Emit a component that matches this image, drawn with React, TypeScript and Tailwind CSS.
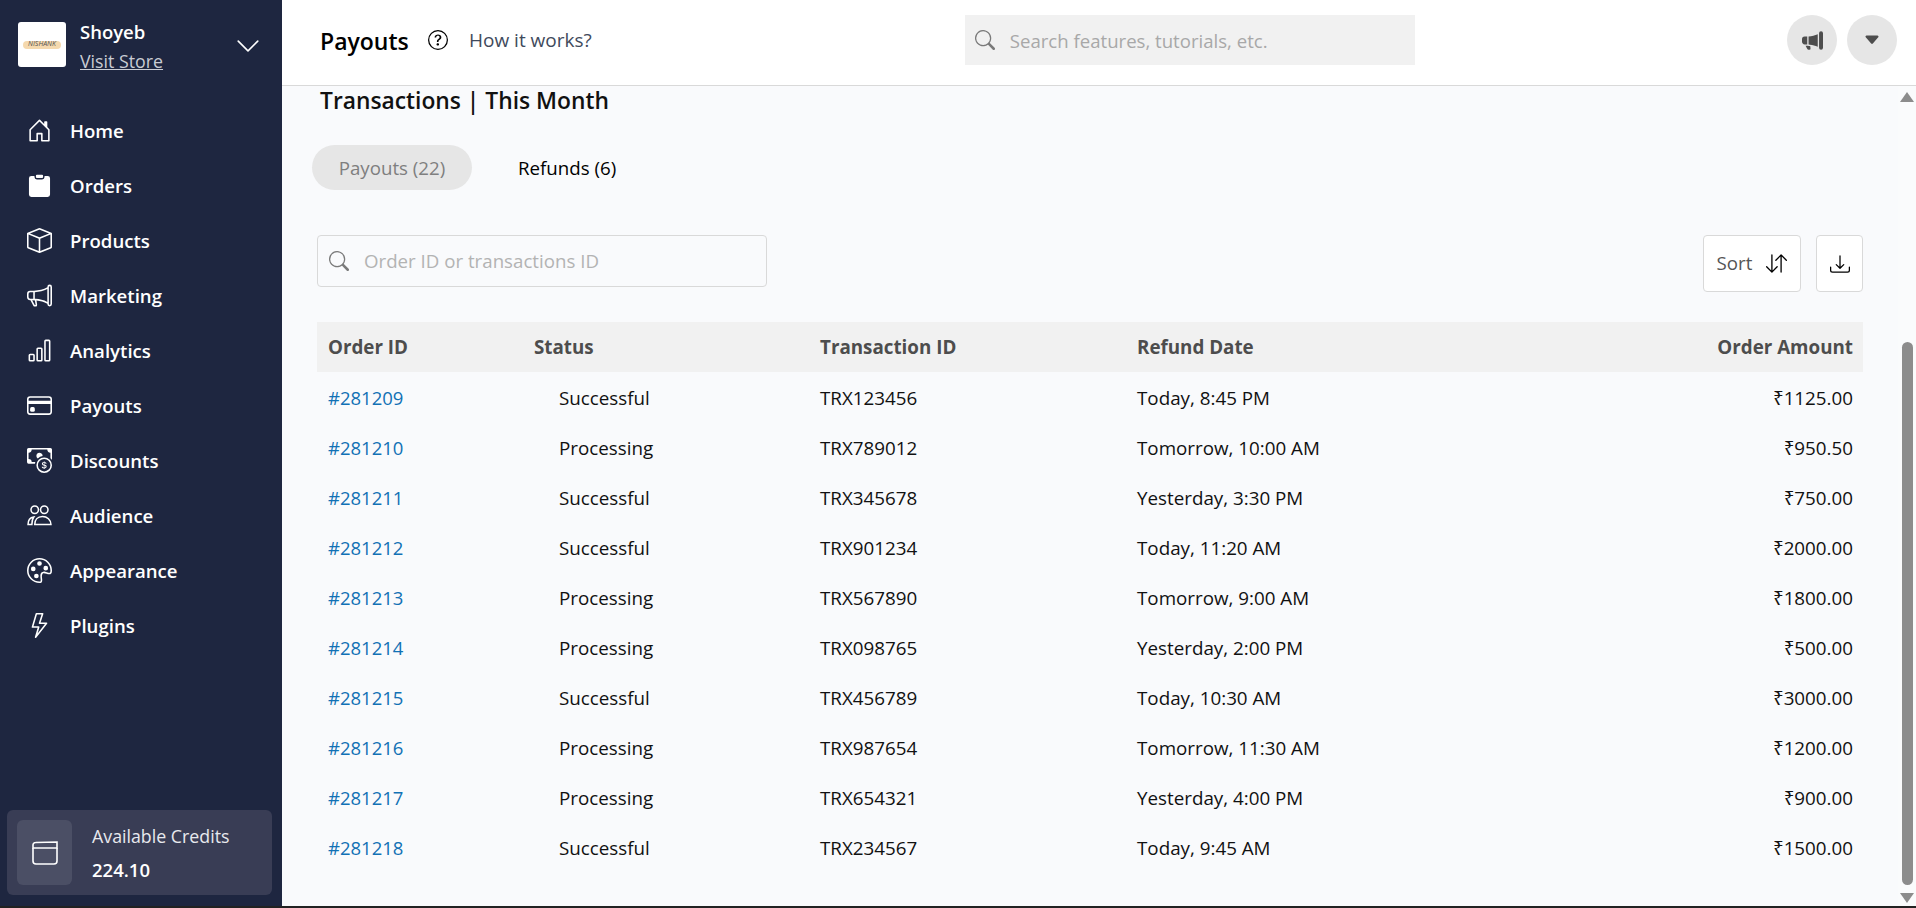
import {
  BsArrowDownUp,
  BsBarChart,
  BsBox,
  BsCaretDownFill,
  BsCashCoin,
  BsChevronDown,
  BsCreditCard,
  BsDownload,
  BsHouseDoor,
  BsLightning,
  BsMegaphone,
  BsMegaphoneFill,
  BsPalette,
  BsQuestionCircle,
  BsSearch,
} from "react-icons/bs";

function OrdersIcon({ className }: { className?: string }) {
  return (
    <svg viewBox="0 0 24 26" className={className} fill="none">
      <path d="M3.5 3H20.5A2.5 2.5 0 0 1 23 5.5V22.5A2.5 2.5 0 0 1 20.5 25H3.500A2.500 2.500 0 0 1 1 22.5V5.500A2.500 2.500 0 0 1 3.500 3Z" fill="#fff" />
      <rect x="7.500" y="1" width="9" height="5" rx="1.800" fill="#fff" stroke="#1e2640" strokeWidth="1.500" />
    </svg>
  );
}

function AudienceIcon({ className }: { className?: string }) {
  return (
    <svg viewBox="0 0 26 22" className={className} fill="none" stroke="#fff" strokeWidth="1.600">
      <circle cx="8" cy="5" r="3.900" />
      <circle cx="18" cy="5" r="3.900" />
      <path d="M1 20.500C1 16 3 13 7 12.500C5.500 14.500 5 17 5 20.500Z" />
      <path d="M8 20.500C8 15.500 11 12 16 12C21 12 25 15.500 25 20.500Z" />
    </svg>
  );
}

function CreditsIcon({ className }: { className?: string }) {
  return (
    <svg viewBox="0 0 26 24" className={className} fill="none" stroke="#fff" strokeWidth="1.600">
      <path d="M1 7V20A3 3 0 0 0 4 23H22A3 3 0 0 0 25 20V7" />
      <path d="M1 7V4A2.500 2.500 0 0 1 3.500 1.500L25 1V7H1Z" />
    </svg>
  );
}

const navItems = [
  { label: "Home", icon: <BsHouseDoor className="size-[25px]" /> },
  { label: "Orders", icon: <OrdersIcon className="h-[25px] w-[23px]" /> },
  { label: "Products", icon: <BsBox className="size-[25px]" /> },
  { label: "Marketing", icon: <BsMegaphone className="size-[25px]" /> },
  { label: "Analytics", icon: <BsBarChart className="size-[25px]" /> },
  { label: "Payouts", icon: <BsCreditCard className="size-[25px]" /> },
  { label: "Discounts", icon: <BsCashCoin className="size-[25px]" /> },
  { label: "Audience", icon: <AudienceIcon className="h-[21px] w-[25px]" /> },
  { label: "Appearance", icon: <BsPalette className="size-[25px]" /> },
  { label: "Plugins", icon: <BsLightning className="size-[25px]" /> },
];

const rows = [
  ["#281209", "Successful", "TRX123456", "Today, 8:45 PM", "₹1125.00"],
  ["#281210", "Processing", "TRX789012", "Tomorrow, 10:00 AM", "₹950.50"],
  ["#281211", "Successful", "TRX345678", "Yesterday, 3:30 PM", "₹750.00"],
  ["#281212", "Successful", "TRX901234", "Today, 11:20 AM", "₹2000.00"],
  ["#281213", "Processing", "TRX567890", "Tomorrow, 9:00 AM", "₹1800.00"],
  ["#281214", "Processing", "TRX098765", "Yesterday, 2:00 PM", "₹500.00"],
  ["#281215", "Successful", "TRX456789", "Today, 10:30 AM", "₹3000.00"],
  ["#281216", "Processing", "TRX987654", "Tomorrow, 11:30 AM", "₹1200.00"],
  ["#281217", "Processing", "TRX654321", "Yesterday, 4:00 PM", "₹900.00"],
  ["#281218", "Successful", "TRX234567", "Today, 9:45 AM", "₹1500.00"],
];

function Sidebar() {
  return (
    <aside className="flex w-[282px] shrink-0 flex-col bg-[#1e2640] text-white">
      <div className="flex h-[103px] items-start pl-[18px] pr-[21px] pt-[22px]">
        <div className="relative flex h-[45px] w-[48px] items-center justify-center overflow-hidden rounded-[3px] bg-white">
          <div className="h-[8px] w-[38px] rounded-full bg-[#f5d9ae]" />
          <span className="absolute inset-x-0 top-[16px] text-center text-[7px] italic leading-[12px] text-[#555]">NISHANK</span>
        </div>
        <div className="ml-[14px] flex flex-col">
          <span className="text-[18.500px] font-semibold leading-[20px]">Shoyeb</span>
          <span className="mt-[9px] text-[17.800px] leading-[20px] text-[#c9ccd4] underline">Visit Store</span>
        </div>
        <BsChevronDown className="ml-auto mt-[11px] size-[26px]" />
      </div>
      <nav className="flex flex-col">
        {navItems.map((item) => (
          <div key={item.label} className="flex h-[55px] items-center pl-[27px]">
            <span className="flex w-[25px] justify-center">{item.icon}</span>
            <span className="ml-[18px] text-[18.600px] font-semibold">{item.label}</span>
          </div>
        ))}
      </nav>
      <div className="mb-[11px] ml-[7px] mr-[10px] mt-auto flex h-[85px] items-center rounded-[6px] bg-[#393d55] pl-[10px]">
        <div className="flex h-[65px] w-[55px] items-center justify-center rounded-[6px] bg-[#4b4f65]">
          <CreditsIcon className="h-[24px] w-[26px]" />
        </div>
        <div className="ml-[20px] flex flex-col">
          <span className="text-[17.800px] leading-[24px] text-[#e8e9ee]">Available Credits</span>
          <span className="mt-[10px] text-[18.500px] font-semibold leading-[24px]">224.10</span>
        </div>
      </div>
    </aside>
  );
}

function Header() {
  return (
    <header className="flex h-[86px] shrink-0 items-center border-b border-[#d9d9d9] bg-white pb-[5px] pl-[38px] pr-[19px]">
      <span className="w-[108px] pt-[3px] text-[23px] font-semibold text-black">Payouts</span>
      <BsQuestionCircle className="size-[20px] text-black" />
      <span className="ml-[21px] pt-[1px] text-[19px] text-[#3f4a5c]">How it works?</span>
      <div className="ml-[373px] flex h-[50px] w-[450px] items-center bg-[#f1f1f1] pl-[10px]">
        <BsSearch className="size-[20px] text-[#7a7a7a]" />
        <span className="ml-[15px] pt-[1px] text-[18.600px] text-[#a8a8a8]">Search features, tutorials, etc.</span>
      </div>
      <div className="ml-auto flex gap-[10px]">
        <div className="flex size-[50px] items-center justify-center rounded-full bg-[#e6e6e6]">
          <BsMegaphoneFill className="size-[21px] text-[#4d4d4d]" />
        </div>
        <div className="flex size-[50px] items-center justify-center rounded-full bg-[#e6e6e6]">
          <BsCaretDownFill className="size-[18px] text-[#4d4d4d]" />
        </div>
      </div>
    </header>
  );
}

function Scrollbar() {
  return (
    <div className="flex w-[18px] shrink-0 flex-col items-center bg-[#fafbfc] pt-[6px]">
      <div className="h-0 w-0 border-x-[7px] border-b-[10px] border-x-transparent border-b-[#8c8c8c]" />
      <div className="mt-[240px] h-[543px] w-[11px] rounded-full bg-[#8c8c8c]" />
      <div className="mt-[8px] h-0 w-0 border-x-[7px] border-t-[10px] border-x-transparent border-t-[#8c8c8c]" />
    </div>
  );
}

function Transactions() {
  return (
    <main className="min-w-0 flex-1 bg-[#f9fafc] pl-[35px] pr-[35px]">
      <h2 className="pl-[3px] text-[22.800px] font-semibold leading-[30px] text-[#111]">Transactions | This Month</h2>
      <div className="ml-[-5px] mt-[29px] flex items-center">
        <div className="flex h-[45px] w-[160px] items-center justify-center rounded-full bg-[#e6e6e6] pt-[1px] text-[18.700px] text-[#7f7f7f]">
          Payouts (22)
        </div>
        <span className="ml-[46px] pt-[1px] text-[18.700px] text-black">Refunds (6)</span>
      </div>
      <div className="mt-[45px] flex items-start">
        <div className="flex h-[52px] w-[450px] items-center rounded-[4px] border border-[#d9d9d9] pl-[11px]">
          <BsSearch className="size-[20px] text-[#7a7a7a]" />
          <span className="ml-[15px] pt-[1px] text-[18.700px] text-[#b3b3b3]">Order ID or transactions ID</span>
        </div>
        <div className="ml-auto flex h-[57px] w-[98px] items-center justify-center gap-[14px] rounded-[4px] border border-[#d9d9d9] bg-white text-[18.700px] text-[#555]">
          Sort
          <BsArrowDownUp className="size-[21px] text-black" />
        </div>
        <div className="ml-[15px] flex h-[57px] w-[47px] items-center justify-center rounded-[4px] border border-[#d9d9d9] bg-white">
          <BsDownload className="size-[20px] text-black" />
        </div>
      </div>
      <div className="mt-[30px] grid h-[50px] grid-cols-[206px_286px_317px_1fr_auto] items-center bg-[#f1f1f1] pl-[11px] pr-[10px] pt-[1px] text-[18.800px] font-bold text-[#4d4d4d]">
        <span>Order ID</span>
        <span>Status</span>
        <span>Transaction ID</span>
        <span>Refund Date</span>
        <span className="text-right">Order Amount</span>
      </div>
      {rows.map((row) => (
        <div key={row[0]} className="grid h-[50px] grid-cols-[206px_286px_317px_1fr_auto] items-center pl-[11px] pr-[10px] pt-[2px] text-[18.800px] text-[#111]">
          <span className="text-[18.500px] font-medium text-[#1271b5]">{row[0]}</span>
          <span className="pl-[25px]">{row[1]}</span>
          <span>{row[2]}</span>
          <span>{row[3]}</span>
          <span className="text-right">{row[4]}</span>
        </div>
      ))}
    </main>
  );
}

export default function App() {
  return (
    <div className="flex h-[908px] w-[1916px] flex-col overflow-hidden bg-[#222] font-['Open_Sans','Noto_Sans',sans-serif]">
      <div className="flex h-[906px]">
        <Sidebar />
        <div className="flex min-w-0 flex-1 flex-col">
          <Header />
          <div className="flex min-h-0 flex-1">
            <Transactions />
            <Scrollbar />
          </div>
        </div>
      </div>
    </div>
  );
}
